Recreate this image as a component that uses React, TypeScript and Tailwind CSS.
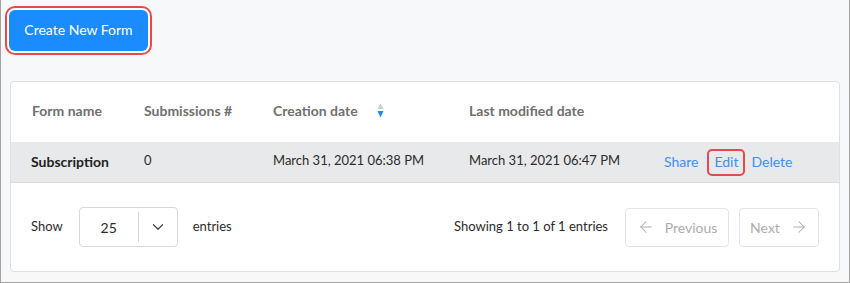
import { ArrowLeft, ArrowRight, ChevronDown } from "lucide-react";

function SortIcon() {
  return (
    <svg width="7" height="16" viewBox="0 0 7 16" className="ml-[19px]">
      <path d="M3.5 0.5 L6.5 6 L0.5 6 Z" fill="#c9cdd2" />
      <path d="M0.5 8 L6.5 8 L3.5 14.5 Z" fill="#1d8cf8" />
    </svg>
  );
}

export default function App() {
  return (
    <div
      className="w-[850px] h-[283px] bg-[#f7f8fa] border-l border-r border-b border-[#a3a3a3] flex flex-col"
      style={{ fontFamily: "Lato, 'Open Sans', sans-serif" }}
    >
      <div className="ml-[4px] mt-[6px] self-start rounded-[10px] border-2 border-[#e8474c] bg-white p-[2px]">
        <button className="w-[139px] h-[41px] pb-[2px] rounded-[6px] bg-[#1a8cff] text-white text-[14px]">
          Create New Form
        </button>
      </div>

      <div className="mx-[9px] mt-auto mb-[10px] h-[191px] rounded-[4px] border border-[#dcdfe3] bg-white flex flex-col">
        {/* header */}
        <div className="h-[60px] pb-[3px] flex items-center pl-[21px] text-[14px] font-bold text-[#6f6f6f]">
          <div className="w-[112px]">Form name</div>
          <div className="w-[129px]">Submissions #</div>
          <div className="w-[196px] flex items-center">
            Creation date
            <SortIcon />
          </div>
          <div>Last modified date</div>
        </div>

        {/* row */}
        <div className="h-[41px] pb-[2px] flex items-center pl-[20px] bg-[#e7e9eb] border-b border-[#d9dcdf] text-[13px] text-[#2b2b2b]">
          <div className="w-[113px] text-[14px] font-bold text-[#222]">Subscription</div>
          <div className="w-[129px]">0</div>
          <div className="w-[196px]">March 31, 2021 06:38 PM</div>
          <div className="w-[195px]">March 31, 2021 06:47 PM</div>
          <div className="flex items-center text-[14px] text-[#3d8ff0]">
            <span>Share</span>
            <span className="ml-[9px] mt-[2px] h-[27px] w-[38px] pb-[2px] flex items-center justify-center rounded-[5px] border-2 border-[#e8474c]">
              Edit
            </span>
            <span className="ml-[6px]">Delete</span>
          </div>
        </div>

        {/* footer */}
        <div className="flex-1 flex items-center pl-[20px] pr-[20px] text-[13px] text-[#2b2b2b]">
          <span>Show</span>
          <div className="ml-[16px] w-[99px] h-[40px] rounded-[4px] border border-[#d5d8dc] flex items-center">
            <div className="w-[58px] text-center text-[14px]">25</div>
            <div className="w-px h-[30px] bg-[#d5d8dc]" />
            <div className="flex-1 flex justify-center">
              <ChevronDown size={18} strokeWidth={1.6} color="#444" />
            </div>
          </div>
          <span className="ml-[15px]">entries</span>

          <span className="ml-auto">Showing 1 to 1 of 1 entries</span>
          <div className="ml-[17px] w-[104px] h-[39px] rounded-[4px] border border-[#e3e5e8] flex items-center justify-center gap-[10px] text-[14px] text-[#acacac]">
            <ArrowLeft size={18} strokeWidth={1.4} />
            Previous
          </div>
          <div className="ml-[10px] w-[80px] h-[39px] rounded-[4px] border border-[#e3e5e8] flex items-center justify-center gap-[10px] text-[14px] text-[#acacac]">
            Next
            <ArrowRight size={18} strokeWidth={1.4} />
          </div>
        </div>
      </div>
    </div>
  );
}
